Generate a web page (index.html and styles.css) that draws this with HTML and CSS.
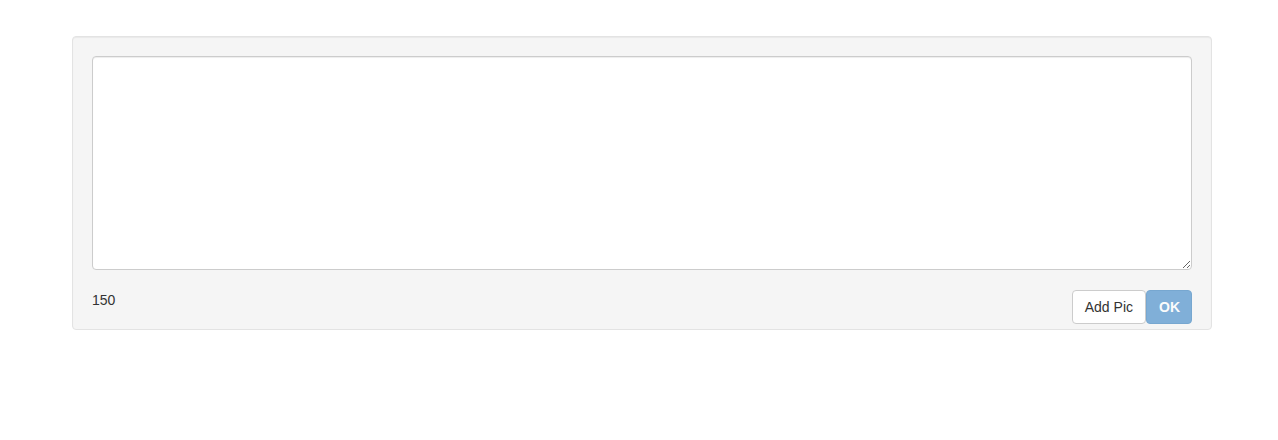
FILE: index.html
```html
<!DOCTYPE html>
<html lang="en">
<head>
	<meta charset="UTF-8"/>
	<meta name="viewport" content="width=device-width, initial-scale=1.0"/>
	<title>Post</title>
	<link rel="stylesheet" href="styles.css">
</head>
<body>
	<div class="well">
		<textarea class="post-text"></textarea>

		<div class="post-footer">
			<span class="counter">150</span>
			<div class="actions">
				<button class="btn btn-default">Add Pic</button>
				<button class="btn btn-primary" disabled>OK</button>
			</div>
		</div>
	</div>
</body>
</html>
```

FILE: styles.css
```css
*{
	box-sizing: border-box;
}
body{
	margin: 0;
	font-family: "Liberation Sans", Arial, sans-serif;
	font-size: 14px;
	line-height: 20px;
	color: #333;
	background: #fff;
}
.well{
	width: 1140px;
	margin: 36px 0 0 72px;
	padding: 19px 19px 5px;
	background: #f5f5f5;
	border: 1px solid #e3e3e3;
	border-radius: 4px;
	box-shadow: inset 0 1px 1px rgba(0,0,0,.05);
}
.post-text{
	display: block;
	width: 100%;
	height: 214px;
	padding: 6px 12px;
	font-family: inherit;
	font-size: 14px;
	color: #555;
	background: #fff;
	border: 1px solid #ccc;
	border-radius: 4px;
	box-shadow: inset 0 1px 1px rgba(0,0,0,.075);
	resize: vertical;
	margin: 0;
}
.post-footer{
	display: flex;
	justify-content: space-between;
	align-items: flex-start;
	margin-top: 20px;
}
.counter{
	display: block;
}
.actions{
	display: flex;
}
.btn{
	height: 34px;
	padding: 6px 12px;
	font-family: inherit;
	font-size: 14px;
	line-height: 20px;
	border: 1px solid transparent;
	border-radius: 4px;
	cursor: pointer;
}
.btn-default{
	color: #333;
	background: #fff;
	border-color: #ccc;
}
.btn-primary{
	padding: 6px 11px 6px 12px;
	color: #fff;
	font-weight: bold;
	background: #428bca;
	border-color: #357ebd;
	opacity: .65;
	cursor: not-allowed;
}
```
